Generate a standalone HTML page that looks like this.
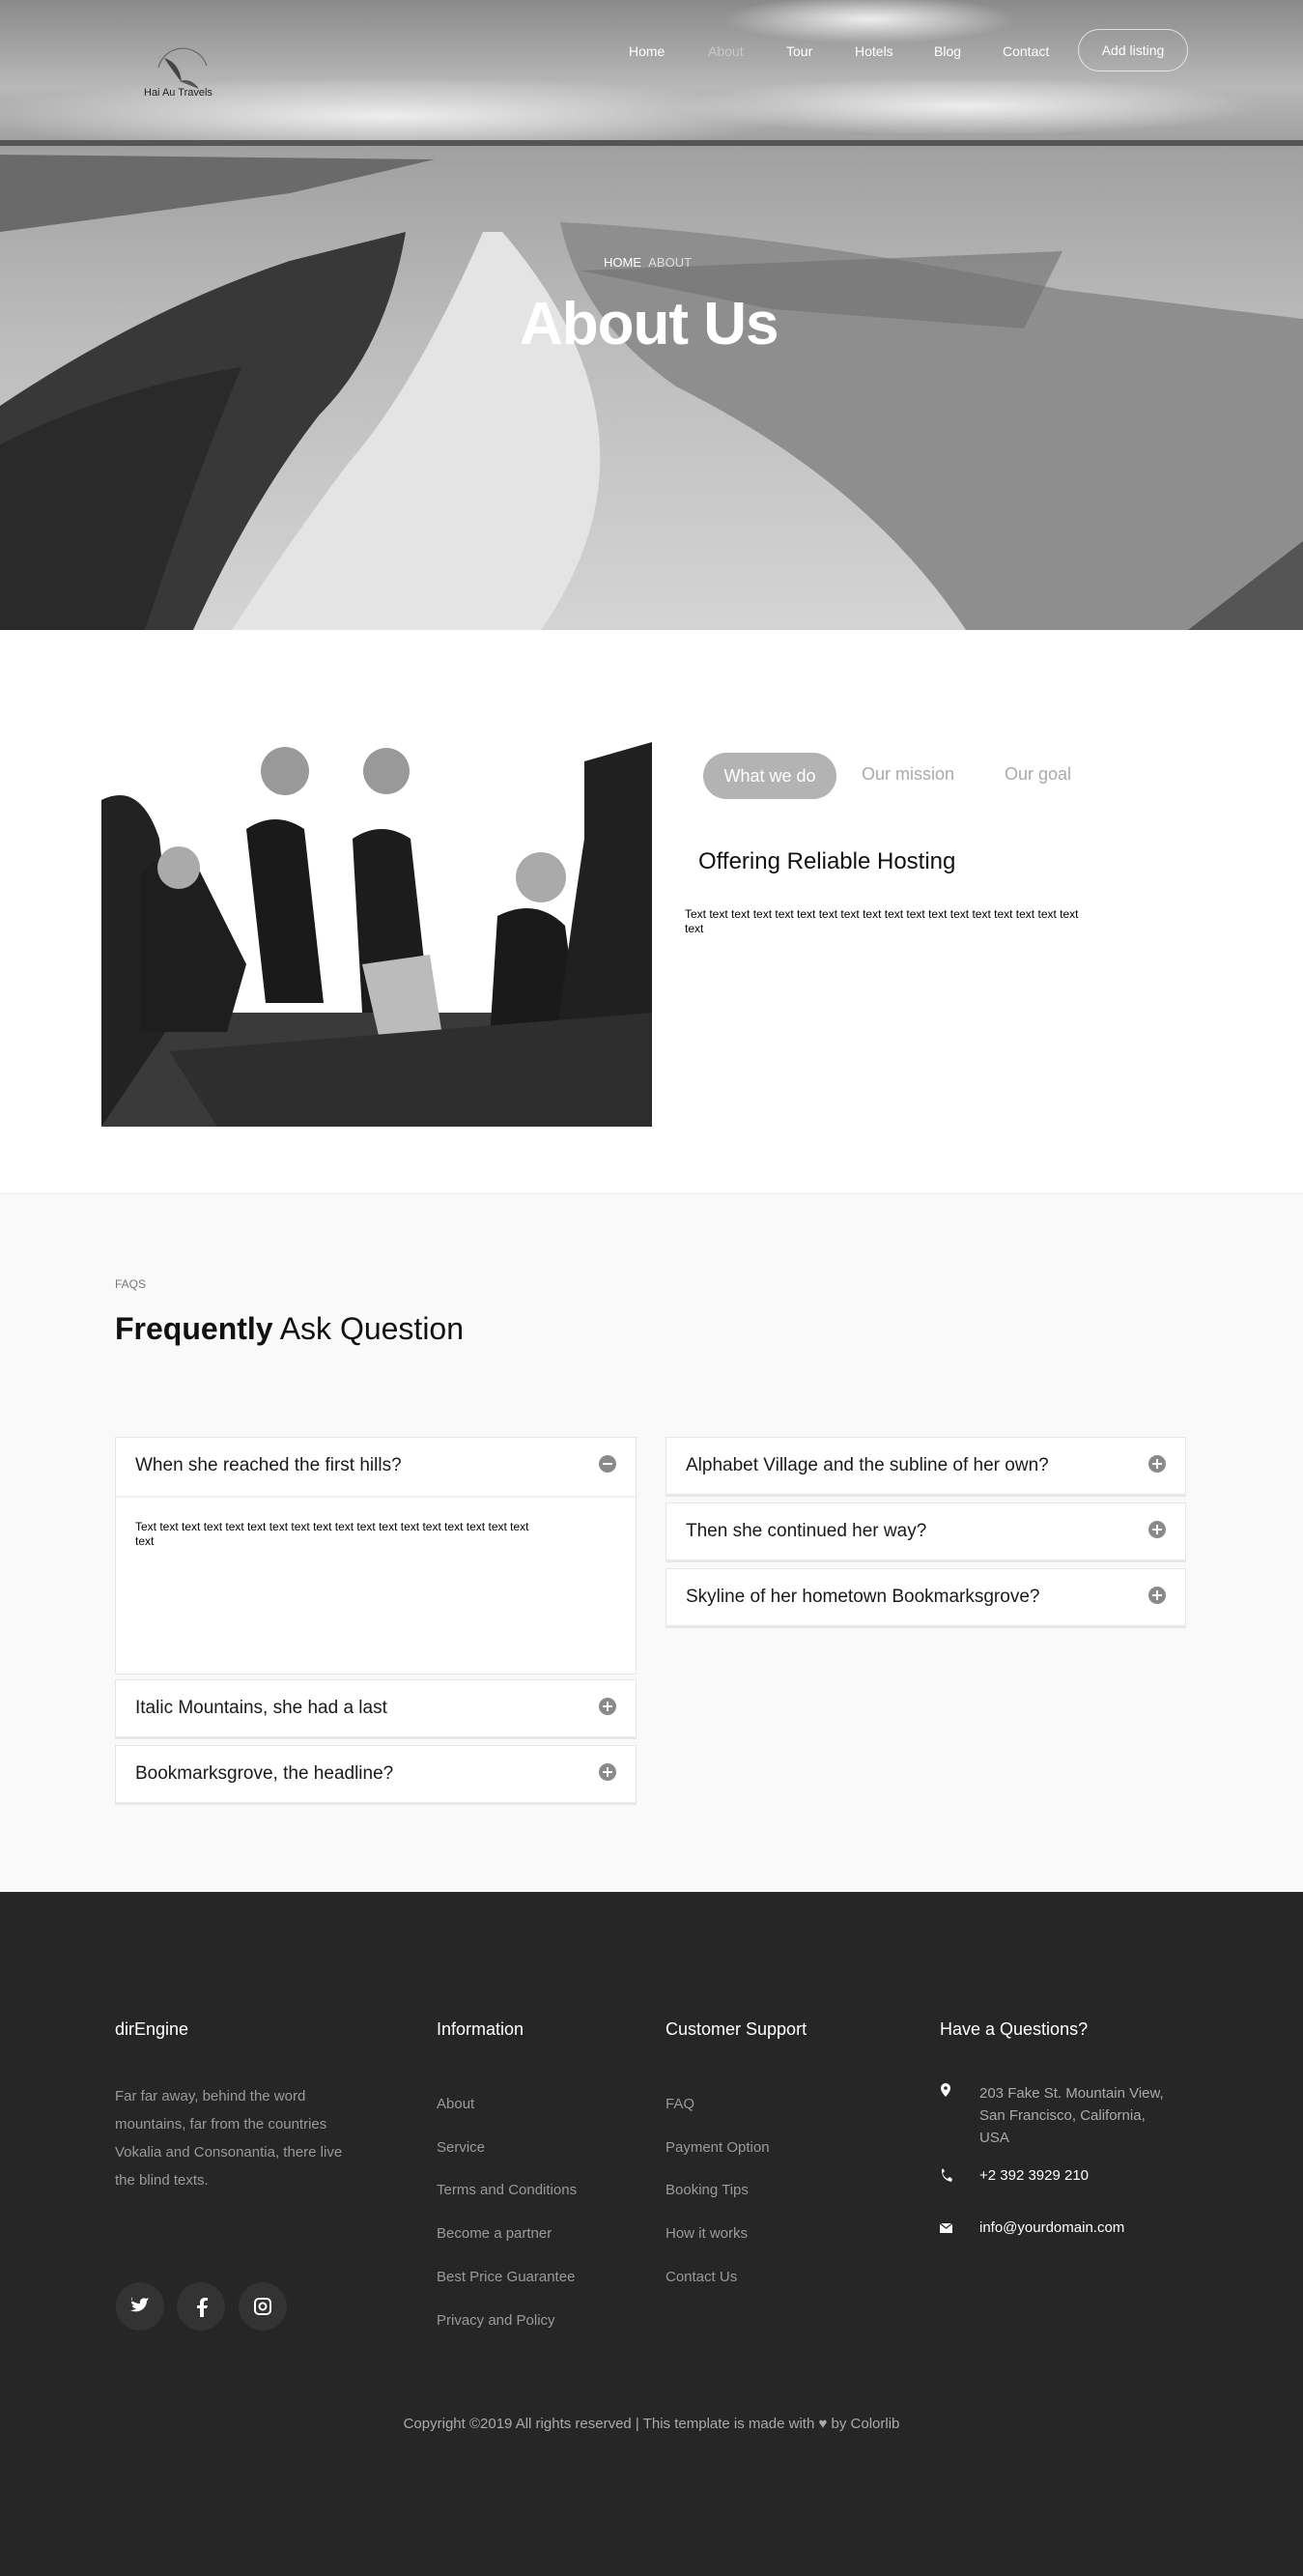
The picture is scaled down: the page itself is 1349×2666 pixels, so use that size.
<!DOCTYPE html>
<html><head><meta charset="utf-8"><style>
*{margin:0;padding:0;box-sizing:border-box}
body{width:1349px;height:2666px;font-family:"Liberation Sans",sans-serif;background:#fff;position:relative;overflow:hidden}
.a{position:absolute;white-space:nowrap}
.nav{color:#fff;font-size:14px;top:45px}
.q{position:absolute;background:#fff;border:1px solid #e6e6e6;border-bottom:3px solid #e8e8e8}
.q span{position:absolute;left:20px;top:18px;font-size:19px;color:#1a1a1a}
.q i{position:absolute;right:20px;top:18px;width:18px;height:18px;border-radius:50%;background:#8a8a8a}
.q i:before{content:"";position:absolute;left:4px;top:8px;width:10px;height:2px;background:#fff}
.q i.p:after{content:"";position:absolute;left:8px;top:4px;width:2px;height:10px;background:#fff}
.fh{color:#fff;font-size:18px;top:2090px}
.fl{color:#9a9a9a;font-size:15px}
.soc{position:absolute;top:2362px;width:50px;height:50px;border-radius:50%;background:#333}
</style></head><body>
<!-- HERO -->
<svg class="a" style="left:0;top:0" width="1349" height="652" viewBox="0 0 1349 652">
<defs>
<linearGradient id="sky" x1="0" y1="0" x2="0" y2="1"><stop offset="0" stop-color="#8a8a8a"/><stop offset="0.6" stop-color="#b8b8b8"/><stop offset="1" stop-color="#a0a0a0"/></linearGradient>
<linearGradient id="sea" x1="0" y1="0" x2="0" y2="1"><stop offset="0" stop-color="#a0a0a0"/><stop offset="0.4" stop-color="#bcbcbc"/><stop offset="1" stop-color="#d4d4d4"/></linearGradient>
<radialGradient id="cl" cx="0.5" cy="0.5" r="0.5"><stop offset="0" stop-color="#eee"/><stop offset="1" stop-color="#eee" stop-opacity="0"/></radialGradient>
</defs>
<rect width="1349" height="150" fill="url(#sky)"/>
<ellipse cx="400" cy="120" rx="420" ry="40" fill="url(#cl)"/>
<ellipse cx="1000" cy="110" rx="300" ry="30" fill="url(#cl)"/>
<ellipse cx="900" cy="20" rx="150" ry="25" fill="url(#cl)"/>
<rect y="150" width="1349" height="502" fill="url(#sea)"/>
<rect y="145" width="1349" height="6" fill="#555"/>
<path d="M0 160 L450 165 L300 200 L0 240Z" fill="#6a6a6a"/>
<path d="M580 230 Q800 240 1100 300 L1349 330 L1349 652 L1000 652 Q900 500 700 400 Q600 330 580 230Z" fill="#8e8e8e"/>
<path d="M600 280 L1100 260 L1060 340 L800 320Z" fill="#707070" opacity=".6"/>
<path d="M500 240 Q430 400 360 480 Q300 560 240 652 L560 652 Q700 450 520 240Z" fill="#e4e4e4"/>
<path d="M0 420 Q150 320 300 270 L420 240 Q400 360 330 430 Q260 520 200 652 L0 652Z" fill="#383838"/>
<path d="M0 460 Q120 400 250 380 Q200 500 150 652 L0 652Z" fill="#2a2a2a"/>
<path d="M1230 652 L1349 560 L1349 652Z" fill="#555"/>
</svg>
<svg class="a" style="left:158px;top:40px" width="60" height="55" viewBox="0 0 60 55">
<path d="M6 30 A26 26 0 0 1 56 28" fill="none" stroke="#666" stroke-width="1.2"/>
<path d="M12 20 Q28 25 30 45 Q22 35 12 20Z" fill="#444"/>
<path d="M28 44 Q40 40 48 52 Q38 48 28 44Z" fill="#555"/>
</svg>
<div class="a" style="left:149px;top:90px;font-size:11px;color:#222">Hai Au Travels</div>
<div class="a nav" style="left:651px">Home</div>
<div class="a nav" style="left:733px;color:#c8c8c8">About</div>
<div class="a nav" style="left:814px">Tour</div>
<div class="a nav" style="left:885px">Hotels</div>
<div class="a nav" style="left:967px">Blog</div>
<div class="a nav" style="left:1038px">Contact</div>
<div class="a" style="left:1116px;top:30px;width:114px;height:44px;border:1px solid rgba(255,255,255,.7);border-radius:22px;color:#fff;font-size:14px;text-align:center;line-height:42px">Add listing</div>
<div class="a" style="left:625px;top:264px;font-size:13px;color:#fff">HOME <span style="color:#ddd">&nbsp;ABOUT</span></div>
<div class="a" style="left:538px;top:300px;font-size:62px;font-weight:bold;color:#fff;letter-spacing:-1px">About Us</div>
<!-- ABOUT -->
<svg class="a" style="left:105px;top:748px" width="570" height="418" viewBox="0 0 570 418">
<rect width="570" height="418" fill="#fff"/>
<rect x="0" y="300" width="570" height="118" fill="#3a3a3a"/>
<path d="M0 80 Q40 60 60 120 L80 300 L0 418Z" fill="#222"/>
<path d="M40 160 Q70 120 100 150 L150 250 L130 320 L40 320Z" fill="#1e1e1e"/>
<circle cx="80" cy="150" r="22" fill="#aaa"/>
<path d="M150 110 Q180 90 210 110 L230 290 L170 290Z" fill="#1a1a1a"/>
<circle cx="190" cy="50" r="25" fill="#999"/>
<path d="M260 120 Q290 100 320 120 L340 300 L270 300Z" fill="#1c1c1c"/>
<circle cx="295" cy="50" r="24" fill="#999"/>
<path d="M410 200 Q450 180 480 210 L500 360 L400 360Z" fill="#1a1a1a"/>
<circle cx="455" cy="160" r="26" fill="#aaa"/>
<path d="M500 40 L570 20 L570 418 L460 418 Q480 250 500 120Z" fill="#202020"/>
<path d="M270 250 L340 240 L360 370 L300 380Z" fill="#bbb"/>
<path d="M70 340 L570 300 L570 418 L120 418Z" fill="#2e2e2e"/>
</svg>
<div class="a" style="left:728px;top:779px;width:138px;height:48px;border-radius:24px;background:#b3b3b3;color:#fff;font-size:18px;text-align:center;line-height:48px">What we do</div>
<div class="a" style="left:892px;top:791px;font-size:18px;color:#aaa">Our mission</div>
<div class="a" style="left:1040px;top:791px;font-size:18px;color:#aaa">Our goal</div>
<div class="a" style="left:723px;top:878px;font-size:24px;color:#111">Offering Reliable Hosting</div>
<div class="a" style="left:709px;top:939px;font-size:12px;line-height:15px;color:#000;white-space:normal;width:430px">Text text text text text text text text text text text text text text text text text text text</div>
<!-- FAQ -->
<div class="a" style="left:0;top:1235px;width:1349px;height:723px;background:#f9f9f9;border-top:1px solid #eee"></div>
<div class="a" style="left:119px;top:1322px;font-size:12px;color:#777">FAQS</div>
<div class="a" style="left:119px;top:1357px;font-size:32px;color:#111"><b>Frequently</b> Ask Question</div>
<div class="q" style="left:119px;top:1487px;width:540px;height:246px;border-bottom:1px solid #e6e6e6"><span>When she reached the first hills?</span><i></i>
<div style="position:absolute;left:0;top:60px;width:538px;border-top:2px solid #f0f0f0"></div>
<div style="position:absolute;left:20px;top:85px;width:430px;font-size:12px;line-height:15px;color:#000">Text text text text text text text text text text text text text text text text text text text</div></div>
<div class="q" style="left:119px;top:1738px;width:540px;height:62px"><span>Italic Mountains, she had a last</span><i class="p"></i></div>
<div class="q" style="left:119px;top:1806px;width:540px;height:62px"><span>Bookmarksgrove, the headline?</span><i class="p"></i></div>
<div class="q" style="left:689px;top:1487px;width:539px;height:62px"><span>Alphabet Village and the subline of her own?</span><i class="p"></i></div>
<div class="q" style="left:689px;top:1555px;width:539px;height:62px"><span>Then she continued her way?</span><i class="p"></i></div>
<div class="q" style="left:689px;top:1623px;width:539px;height:62px"><span>Skyline of her hometown Bookmarksgrove?</span><i class="p"></i></div>
<!-- FOOTER -->
<div class="a" style="left:0;top:1958px;width:1349px;height:708px;background:#262626"></div>
<div class="a fh" style="left:119px">dirEngine</div>
<div class="a fh" style="left:452px">Information</div>
<div class="a fh" style="left:689px">Customer Support</div>
<div class="a fh" style="left:973px">Have a Questions?</div>
<div class="a fl" style="left:119px;top:2155px;white-space:normal;width:245px;line-height:29px">Far far away, behind the word mountains, far from the countries Vokalia and Consonantia, there live the blind texts.</div>
<div class="a fl" style="left:452px;top:2156px;line-height:44.7px">About<br>Service<br>Terms and Conditions<br>Become a partner<br>Best Price Guarantee<br>Privacy and Policy</div>
<div class="a fl" style="left:689px;top:2156px;line-height:44.7px">FAQ<br>Payment Option<br>Booking Tips<br>How it works<br>Contact Us</div>
<div class="a fl" style="left:1014px;top:2155px;line-height:23px;color:#aaa">203 Fake St. Mountain View,<br>San Francisco, California,<br>USA</div>
<div class="a" style="left:1014px;top:2243px;font-size:15px;color:#fff">+2 392 3929 210</div>
<div class="a" style="left:1014px;top:2297px;font-size:15px;color:#fff">info@yourdomain.com</div>
<svg class="a" style="left:973px;top:2156px" width="14" height="170" viewBox="0 0 14 170">
<path d="M6 0a5 5 0 0 1 5 5c0 4-5 9-5 9s-5-5-5-9a5 5 0 0 1 5-5z" fill="#fff"/><circle cx="6" cy="5" r="1.8" fill="#262626"/>
<path d="M2 90 q0 10 10 12 l1-3 -3-2 -2 2 q-4-2-5-6 l2-2 -2-3z" fill="#fff"/>
<rect x="0" y="145" width="13" height="10" fill="#fff"/><path d="M0 145 l6.5 5 6.5-5" stroke="#262626" fill="none" stroke-width="1.3"/>
</svg>
<div class="soc" style="left:120px"></div><div class="soc" style="left:183px"></div><div class="soc" style="left:247px"></div>
<svg class="a" style="left:120px;top:2362px" width="180" height="50" viewBox="0 0 180 50">
<path d="M17 19c2 2 5 3 8 3-1-4 3-7 6-5 1 0 2-1 3-1-1 1-1 2-2 2 1 0 2 0 2-1-1 1-1 2-2 2 0 8-8 14-17 10 3 0 5-1 6-2-2 0-4-1-4-3h2c-2-1-3-2-3-4h2c-2-1-2-3-1-5z" fill="#fff"/>
<path d="M87 36V27h-3v-3h3v-3c0-3 2-5 5-5h3v3h-2c-1 0-2 1-2 2v3h4l-1 3h-3v9z" fill="#fff"/>
<rect x="144" y="17" width="16" height="16" rx="4" fill="none" stroke="#fff" stroke-width="2"/><circle cx="152" cy="25" r="3.5" fill="none" stroke="#fff" stroke-width="2"/>
</svg>
<div class="a" style="left:0;width:1349px;text-align:center;top:2500px;font-size:15px;color:#aaa">Copyright ©2019 All rights reserved | This template is made with ♥ by Colorlib</div>
</body></html>
